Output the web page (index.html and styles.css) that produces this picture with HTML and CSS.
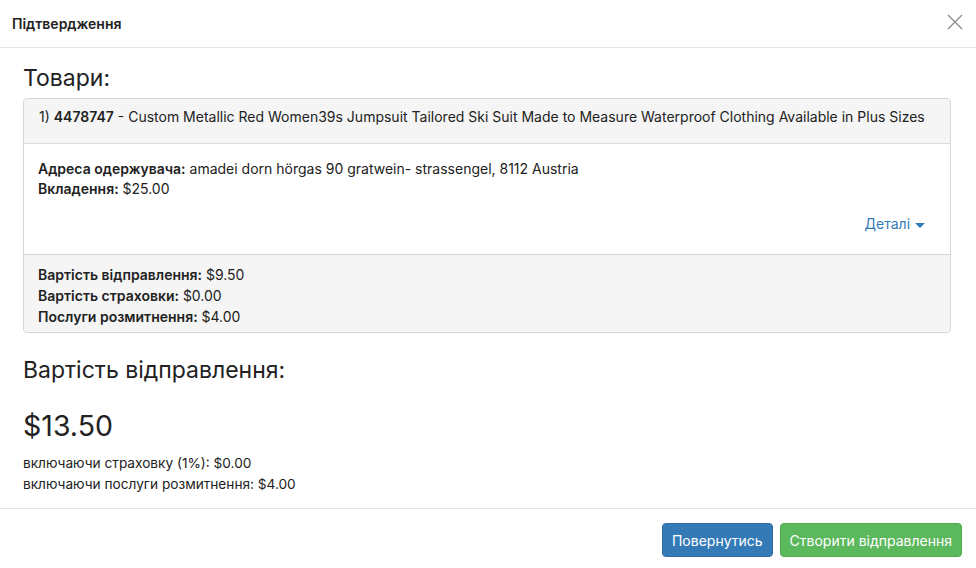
FILE: index.html
```html
<!DOCTYPE html>
<html>
<head>
  <meta charset="utf-8">
  <title>Підтвердження</title>
  <link rel="stylesheet" href="styles.css">
</head>
<body>
  <div class="modal">
    <div class="modal-header">
      <h4 class="modal-title">Підтвердження</h4>
      <button class="close" aria-label="Закрити">
        <svg width="16" height="16" viewBox="0 0 16 16"><path d="M1 1L15 15M15 1L1 15" stroke="#8a8a8a" stroke-width="1.3" fill="none"/></svg>
      </button>
    </div>

    <div class="modal-body">
      <h3>Товари:</h3>
      <div class="panel">
        <div class="panel-heading">1) <b>4478747</b> - Custom Metallic Red Women39s Jumpsuit Tailored Ski Suit Made to Measure Waterproof Clothing Available in Plus Sizes</div>
        <div class="panel-body">
          <div><b>Адреса одержувача:</b> amadei dorn hörgas 90 gratwein- strassengel, 8112 Austria</div>
          <div><b>Вкладення:</b> $25.00</div>
          <div class="details"><a href="#">Деталі <span class="caret"></span></a></div>
        </div>
        <div class="panel-footer">
          <div><b>Вартість відправлення:</b> $9.50</div>
          <div><b>Вартість страховки:</b> $0.00</div>
          <div><b>Послуги розмитнення:</b> $4.00</div>
        </div>
      </div>

      <h3 class="cost-title">Вартість відправлення:</h3>
      <div class="total">$13.50</div>
      <div class="note">включаючи страховку (1%): $0.00</div>
      <div class="note">включаючи послуги розмитнення: $4.00</div>
    </div>

    <div class="modal-footer">
      <button class="btn btn-primary">Повернутись</button>
      <button class="btn btn-success">Створити відправлення</button>
    </div>
  </div>
</body>
</html>
```

FILE: styles.css
```css
* {
    box-sizing: border-box;
}

body {
    margin: 0;
    background: #fff;
    font-family: Inter, "Liberation Sans", Arial, sans-serif;
    font-size: 14px;
    line-height: 20px;
    color: #222;
}

b {
    font-weight: 600;
}

.modal {
    width: 976px;
    height: 568px;
    overflow: hidden;
}

.modal-header {
    display: flex;
    align-items: center;
    justify-content: space-between;
    height: 48px;
    padding: 0 13px 0 12px;
    border-bottom: 1px solid #e5e5e5;
}

.modal-title {
    margin: 0;
    font-size: 14px;
    font-weight: 600;
    color: #222;
}

.close {
    border: none;
    background: none;
    padding: 0;
    margin-top: -4px;
    width: 16px;
    height: 16px;
}

.modal-body {
    padding: 16px 25px 13px 23px;
}

h3 {
    margin: 0 0 6px;
    font-size: 23px;
    font-weight: normal;
    line-height: 28px;
    color: #222;
}

.panel {
    border: 1px solid #d6d6d6;
    border-radius: 4px;
    overflow: hidden;
}

.panel-heading {
    background: #f5f5f5;
    height: 45px;
    padding: 8px 15px;
    border-bottom: 1px solid #dcdcdc;
    line-height: 20px;
}

.panel-body {
    padding: 15px 14px 14px;
    height: 110px;
}

.details {
    text-align: right;
    margin-top: 15px;
    padding-right: 11px;
}

.details a {
    color: #337ab7;
    text-decoration: none;
}

.caret {
    display: inline-block;
    width: 0;
    height: 0;
    margin-left: 1px;
    vertical-align: middle;
    border-top: 5px solid #337ab7;
    border-left: 5px solid transparent;
    border-right: 5px solid transparent;
}

.panel-footer {
    background: #f5f5f5;
    border-top: 1px solid #d6d6d6;
    padding: 9px 14px 5px;
    line-height: 21px;
}

.cost-title {
    margin-top: 23px;
}

.total {
    font-size: 28.5px;
    line-height: 36px;
    margin: 24px 0 9px;
}

.note {
    font-size: 13.65px;
    line-height: 21px;
}

.modal-footer {
    border-top: 1px solid #e5e5e5;
    display: flex;
    justify-content: flex-end;
    gap: 7px;
    padding: 14px 14px 0;
}

.btn {
    border: 1px solid transparent;
    border-radius: 4px;
    height: 34px;
    padding: 0 9px;
    font-family: Inter, "Liberation Sans", Arial, sans-serif;
    font-size: 14px;
    color: #fff;
}

.btn-primary {
    background: #337ab7;
    border-color: #2e6da4;
}

.btn-success {
    background: #5cb85c;
    border-color: #4cae4c;
}
```
